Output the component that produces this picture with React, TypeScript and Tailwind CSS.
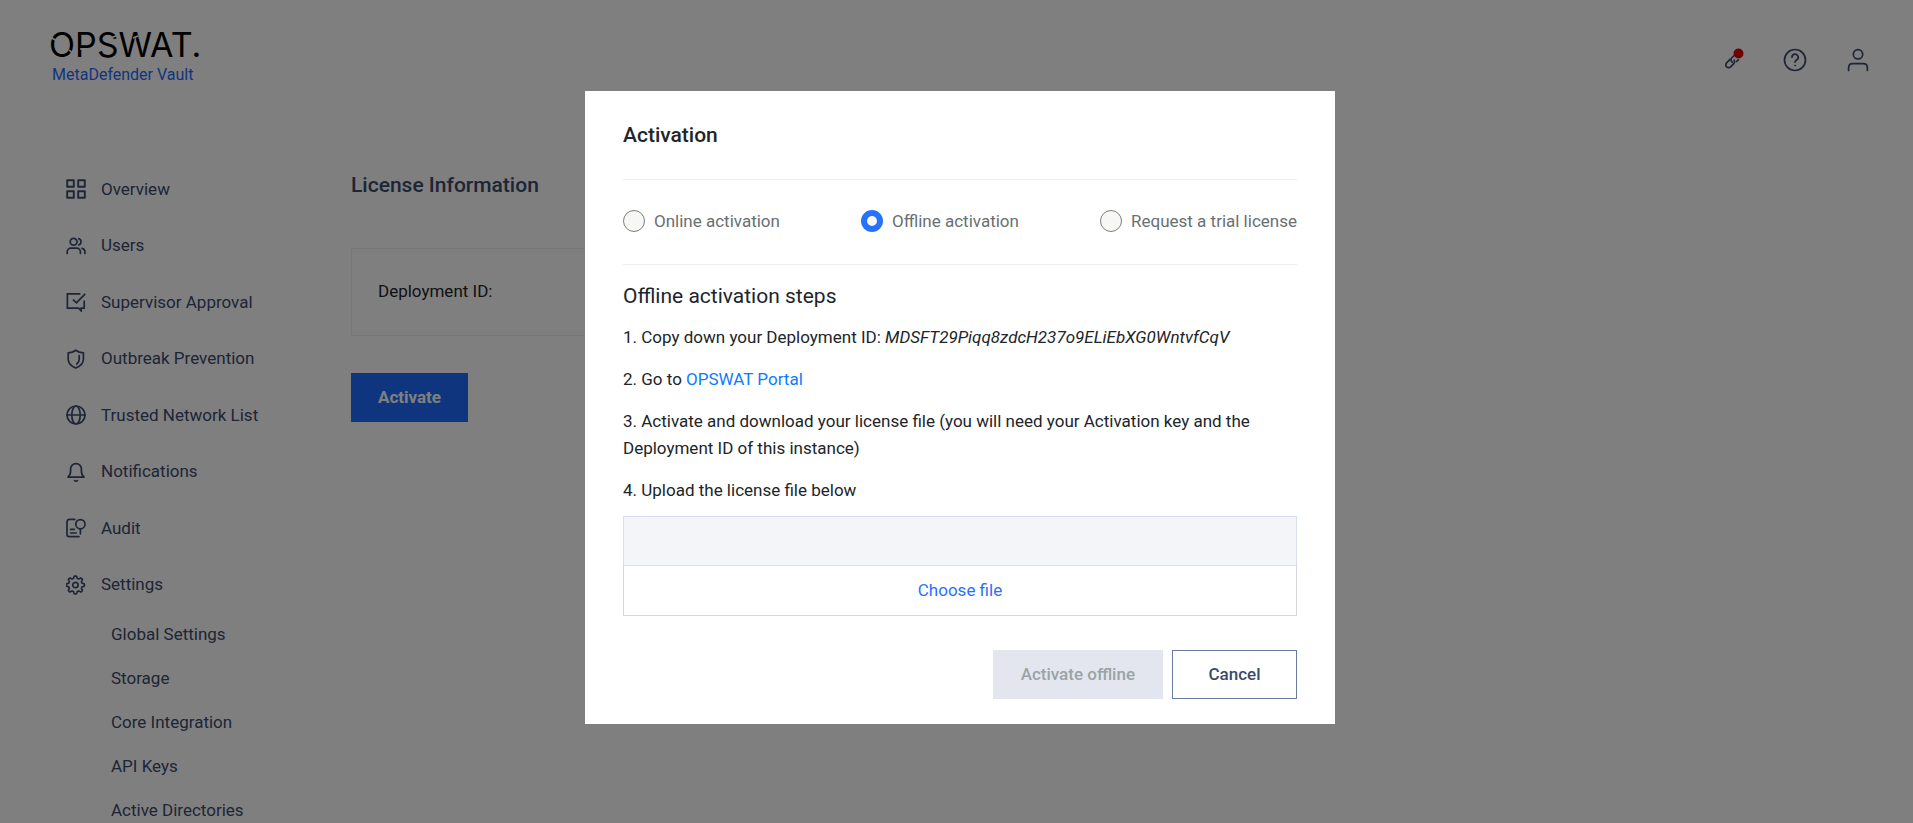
import React, { useState } from "react";

const stroke = {
  fill: "none",
  stroke: "currentColor",
  strokeWidth: 1.7,
  strokeLinecap: "round",
  strokeLinejoin: "round",
} as const;

function Icon({ children }: { children: React.ReactNode }) {
  return (
    <svg viewBox="0 0 20 20" className="h-5 w-5 shrink-0" aria-hidden="true" {...stroke}>
      {children}
    </svg>
  );
}

const gear = (() => {
  const points: string[] = [];
  for (let i = 0; i <= 96; i++) {
    const a = (i / 96) * Math.PI * 2;
    const r = 7.9 + 1.1 * Math.tanh(2.4 * Math.cos(8 * a));
    points.push(`${(9.4 + r * Math.sin(a)).toFixed(2)} ${(10 - r * Math.cos(a)).toFixed(2)}`);
  }
  return `M${points.join("L")}Z`;
})();

const navItems = [
  {
    label: "Overview",
    icon: (
      <Icon>
        <path d="M1.2 1.2h6.6v6.6H1.2zM12.2 1.2h6.6v6.6h-6.6zM1.2 12.2h6.6v6.6H1.2zM12.2 12.2h6.6v6.6h-6.6z" strokeWidth="1.9" />
      </Icon>
    ),
  },
  {
    label: "Users",
    icon: (
      <Icon>
        <circle cx="7.6" cy="5.8" r="3.4" />
        <path d="M1.2 17.4v-1.6a3.6 3.6 0 0 1 3.6-3.6h6a3.6 3.6 0 0 1 3.6 3.6v1.6M12.8 2.6a3.4 3.4 0 0 1 0 6.4M16 12.4a3.6 3.6 0 0 1 2.9 3.4v1.6" />
      </Icon>
    ),
  },
  {
    label: "Supervisor Approval",
    icon: (
      <Icon>
        <path d="M14.4 1.8H1.4v14.4h11.2l2.6 2.6v-2.6h3V8.6M7 7.6l3.4 3.2 8.8-9" strokeLinecap="butt" strokeLinejoin="miter" />
      </Icon>
    ),
  },
  {
    label: "Outbreak Prevention",
    icon: (
      <Icon>
        <path d="M9.8 1.2C7.4 3 4.8 3.6 2.2 3.8v6.4c0 4 3 6.8 7.6 8.9 4.6-2.1 7.6-4.9 7.6-8.9V3.8C14.8 3.6 12.2 3 9.8 1.2Z" />
        <path d="M13.2 6.6v4c0 1.7-.9 3.2-2.4 4.4" />
      </Icon>
    ),
  },
  {
    label: "Trusted Network List",
    icon: (
      <Icon>
        <circle cx="10" cy="10" r="9" />
        <ellipse cx="10" cy="10" rx="4.2" ry="9" />
        <path d="M1 10h18" />
      </Icon>
    ),
  },
  {
    label: "Notifications",
    icon: (
      <Icon>
        <path d="M2 15.2c1.8-1.4 2.6-3.4 2.6-6.2V7A5.3 5.3 0 0 1 10 1.6 5.3 5.3 0 0 1 15.4 7v2c0 2.8.8 4.8 2.6 6.2ZM8.6 18.6c.8.6 2 .6 2.8 0" />
      </Icon>
    ),
  },
  {
    label: "Audit",
    icon: (
      <Icon>
        <path d="M8.8 1.4H3.2A2.2 2.2 0 0 0 1 3.6v12.8a2.2 2.2 0 0 0 2.2 2.2H13M4.6 11.4h3.6M4.6 15h5.6M14.4 10.8v5" />
        <circle cx="14.4" cy="6.2" r="4.6" />
      </Icon>
    ),
  },
  {
    label: "Settings",
    icon: (
      <Icon>
        <path d={gear} />
        <circle cx="9.4" cy="10" r="2.7" />
      </Icon>
    ),
  },
];

const subItems = ["Global Settings", "Storage", "Core Integration", "API Keys", "Active Directories"];

const modes = ["Online activation", "Offline activation", "Request a trial license"];

function Logo() {
  return (
    <svg viewBox="0 0 170 40" className="h-10 w-[170px]" role="img" aria-label="OPSWAT">
      <text x="-1" y="32" fontFamily="Inter, sans-serif" fontSize="34" fontWeight="400" fill="#000">
        OPSWAT.
      </text>
      <path
        d="M0 12l7 4M19 25l6 5M30 24h5M60 13l6-2M47 27l5-2M83 13l5-2M98 20l5-2M126 14h4"
        stroke="#fff"
        strokeWidth="1.6"
        fill="none"
      />
    </svg>
  );
}

function Page() {
  return (
    <div className="h-screen overflow-hidden bg-white text-[17px] text-[#3c4a6d]">
      <header className="flex h-[121px] items-start justify-between pl-[50px] pr-[43px]">
        <div className="pt-[25px]">
          <Logo />
          <p className="pl-[2px] text-base leading-5 text-[#1d6bfc]">MetaDefender Vault</p>
        </div>
        <div className="flex items-center gap-[39px] pt-12">
          <button type="button" aria-label="Connection status">
            <svg viewBox="0 0 24 24" className="h-6 w-6" {...stroke}>
              <path d="M10 11.4 6.6 14.800a2.800 2.800 0 0 0 0 4 2.800 2.800 0 0 0 4 0l3.200-3.200a2.800 2.800 0 0 0 .4-3.400" />
              <path d="M12.400 14.200a2.800 2.800 0 0 1-.8-4.200l2-2M16.600 13.400l1.800-1.600" />
              <circle cx="18.5" cy="5.5" r="5" fill="#e00008" stroke="none" />
            </svg>
          </button>
          <button type="button" aria-label="Help">
            <svg viewBox="0 0 24 24" className="h-6 w-6" {...stroke}>
              <circle cx="12" cy="12" r="10.5" />
              <path d="M9 9.2a3.1 3.1 0 1 1 4.6 2.7c-1 .6-1.5 1-1.5 2.200" />
              <circle cx="12.1" cy="17.5" r=".5" fill="currentColor" strokeWidth="1" />
            </svg>
          </button>
          <button type="button" aria-label="Account">
            <svg viewBox="0 0 24 24" className="h-6 w-6" {...stroke}>
              <circle cx="12" cy="6.3" r="4.7" />
              <path d="M2.6 22.5v-2.6c0-2.5 1.5-4.3 4-4.3h10.800c2.500 0 4 1.800 4 4.300v2.600" />
            </svg>
          </button>
        </div>
      </header>

      <div className="flex">
        <nav className="w-[351px] shrink-0 pt-10" aria-label="Main">
          <ul className="grid h-[452px] grid-rows-8 pl-[66px]">
            {navItems.map((item) => (
              <li key={item.label} className="flex items-center">
                <a href="#" className="flex items-center gap-[15px]">
                  {item.icon}
                  {item.label}
                </a>
              </li>
            ))}
          </ul>
          <ul className="pl-[111px]">
            {subItems.map((item) => (
              <li key={item} className="flex h-11 items-center">
                <a href="#">{item}</a>
              </li>
            ))}
          </ul>
        </nav>

        <main className="pt-[50px]">
          <h1 className="text-[21px] leading-7 font-medium">License Information</h1>
          <section className="mt-[49px] flex h-[88px] w-[800px] items-center border border-[#eeeff1] px-[26px] text-[#212529]">
            Deployment ID:
          </section>
          <button type="button" className="mt-[37px] h-[49px] bg-[#1d6bfc] px-[27px] font-bold text-white">
            Activate
          </button>
        </main>
      </div>
    </div>
  );
}

function ActivationDialog() {
  const [mode, setMode] = useState(modes[1]);
  return (
    <div className="fixed inset-0 flex items-start justify-center bg-black/50 pt-[91px] pl-[7px]">
      <div
        role="dialog"
        aria-modal="true"
        aria-labelledby="dialog-title"
        className="w-[750px] bg-white px-[38px] pb-[25px] text-[17px] leading-[27px] text-[#212529]"
      >
        <h2 id="dialog-title" className="flex h-[88px] items-center text-[21px] font-medium">
          Activation
        </h2>
        <fieldset className="flex h-[86px] items-center justify-between border-y border-[#f0f0f0] pb-[2px] text-[#697071]">
          {modes.map((item) => (
            <label key={item} className="flex items-center gap-[9px]">
              <input
                type="radio"
                name="mode"
                checked={mode === item}
                onChange={() => setMode(item)}
                className="h-[22px] w-[22px] appearance-none rounded-full border border-[#7f7f7f] bg-[#f7f7f5] checked:border-[6px] checked:border-[#2672fb]"
              />
              {item}
            </label>
          ))}
        </fieldset>

        <h3 className="mt-[18px] text-[21px] leading-[27px]">Offline activation steps</h3>
        <div className="mt-[14px] flex flex-col gap-[15px]">
          <p>
            1. Copy down your Deployment ID: <em>MDSFT29Piqq8zdcH237o9ELiEbXG0WntvfCqV</em>
          </p>
          <p>
            2. Go to{" "}
            <a href="#" className="text-[#0d7bff]">
              OPSWAT Portal
            </a>
          </p>
          <p>
            3. Activate and download your license file (you will need your Activation key and the Deployment ID of this
            instance)
          </p>
          <p id="upload-label">4. Upload the license file below</p>
        </div>

        <div className="mt-3">
          <input
            type="text"
            readOnly
            aria-labelledby="upload-label"
            className="block h-[50px] w-full border border-[#d8deeb] bg-[#f4f5f8] px-4 outline-none"
          />
          <button type="button" className="block h-[50px] w-full border border-t-0 border-[#d6d7d9] text-[#2b70fb]">
            Choose file
          </button>
        </div>

        <div className="mt-[34px] flex justify-end gap-[9px]">
          <button type="button" disabled className="h-[49px] bg-[#e3e6ef] px-7 font-medium text-[#9aa3a6]">
            Activate offline
          </button>
          <button type="button" className="h-[49px] w-[125px] border border-[#6b7a9f] font-medium text-[#3c4a6d]">
            Cancel
          </button>
        </div>
      </div>
    </div>
  );
}

export default function App() {
  return (
    <div className="font-['Roboto',sans-serif]">
      <Page />
      <ActivationDialog />
    </div>
  );
}
